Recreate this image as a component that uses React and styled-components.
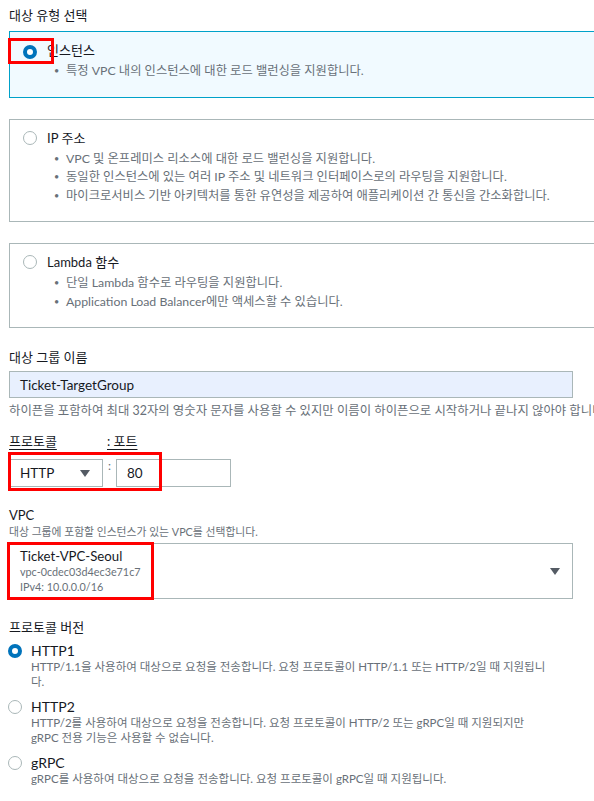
import styled, { createGlobalStyle } from "styled-components";

const GlobalStyle = createGlobalStyle`
  body {
    margin: 0;
    background: #ffffff;
    overflow: hidden;
    font-family: Lato, "Noto Sans CJK KR", sans-serif;
    color: #16191f;
  }
`;

const Palette = {
  Text: "#16191f",
  Muted: "#687078",
  Border: "#aab7b8",
  Blue: "#0073bb",
  Teal: "#00a1c9",
  Mark: "#ff0000",
};

const Page = styled.div`
  width: 640px;
  padding: 6px 0 20px 9px;
`;

const SectionTitle = styled.div`
  font-size: 13px;
  line-height: 18px;
  color: ${Palette.Text};
  margin-top: ${(p) => p.top || 0}px;
  margin-bottom: ${(p) => p.bottom || 0}px;
`;

const Hint = styled.div`
  font-size: ${(p) => p.size || 12}px;
  line-height: 16px;
  color: ${Palette.Muted};
  white-space: nowrap;
  margin-top: ${(p) => p.top || 0}px;
`;

const Cards = styled.div`
  display: flex;
  flex-direction: column;
  gap: 21px;
`;

const Card = styled.div`
  position: relative;
  width: 600px;
  border: 1px solid ${(p) => (p.selected ? Palette.Teal : Palette.Border)};
  background: ${(p) => (p.selected ? "#f1faff" : "#ffffff")};
  padding: 9px 0 16px 13px;
`;

const OptionHead = styled.div`
  display: flex;
  align-items: center;
  gap: 10px;
  font-size: 13px;
  line-height: 18px;
  color: ${Palette.Text};
`;

const Radio = styled.span`
  box-sizing: border-box;
  flex: none;
  width: 14px;
  height: 14px;
  border-radius: 50%;
  margin-top: ${(p) => p.shift || 0}px;
  ${(p) =>
    p.checked
      ? `
  border: 4px solid ${Palette.Blue};
  background: #ffffff;
  `
      : `
  border: 1px solid ${Palette.Border};
  background: #ffffff;
  `}
`;

const Bullets = styled.ul`
  margin: 3px 0 0 0;
  padding: 0 0 0 43px;
  list-style: none;
`;

const Bullet = styled.li`
  position: relative;
  font-size: 12.3px;
  line-height: 18.5px;
  color: ${Palette.Muted};
  white-space: nowrap;
  &::before {
    content: "•";
    position: absolute;
    left: -12px;
    font-size: 9px;
  }
`;

const TextInput = styled.div`
  box-sizing: border-box;
  width: ${(p) => p.width}px;
  height: ${(p) => p.height || 27}px;
  border: 1px solid ${Palette.Border};
  background: ${(p) => p.bg || "#ffffff"};
  display: flex;
  align-items: center;
  padding-left: ${(p) => p.pad || 10}px;
  font-size: 13.5px;
  color: ${Palette.Text};
`;

const LabelRow = styled.div`
  display: flex;
  margin-top: 13px;
  font-size: 13px;
  line-height: 18px;
`;

const Underlined = styled.span`
  width: ${(p) => p.width || "auto"};
  span {
    text-decoration: underline;
    text-underline-offset: 3px;
  }
`;

const FieldRow = styled.div`
  position: relative;
  display: flex;
  align-items: flex-start;
  margin-top: 9px;
`;

const Colon = styled.span`
  width: 13px;
  text-align: center;
  font-size: 12px;
  line-height: 14px;
  color: ${Palette.Muted};
`;

const Select = styled.div`
  box-sizing: border-box;
  width: 94px;
  height: 28px;
  border: 1px solid ${Palette.Border};
  display: flex;
  align-items: center;
  justify-content: space-between;
  padding: 0 12px 0 10px;
  font-size: 13.5px;
  color: ${Palette.Text};
`;

const Caret = styled.span`
  width: 0;
  height: 0;
  border-left: 5px solid transparent;
  border-right: 5px solid transparent;
  border-top: 7px solid #545b64;
`;

const VpcSelect = styled.div`
  position: relative;
  box-sizing: border-box;
  width: 564px;
  height: 56px;
  margin-top: 3px;
  border: 1px solid ${Palette.Border};
  display: flex;
  align-items: center;
  justify-content: space-between;
  padding: 0 12px 0 10px;
`;

const VpcLines = styled.div`
  display: flex;
  flex-direction: column;
  line-height: 15px;
`;

const VpcName = styled.span`
  font-size: 13.2px;
  color: ${Palette.Text};
`;

const VpcMeta = styled.span`
  font-size: 10.8px;
  color: ${Palette.Muted};
`;

const VersionList = styled.div`
  display: flex;
  flex-direction: column;
  gap: 10px;
  margin-top: 7px;
`;

const Version = styled.div`
  display: grid;
  grid-template-columns: 23px 1fr;
  margin-left: -1px;
`;

const VersionName = styled.div`
  font-size: 14px;
  line-height: 16px;
  color: ${Palette.Text};
`;

const VersionDesc = styled.div`
  grid-column: 2;
  font-size: 11.5px;
  line-height: 15px;
  color: ${Palette.Muted};
  white-space: nowrap;
`;

const Mark = styled.div`
  position: absolute;
  left: ${(p) => p.x}px;
  top: ${(p) => p.y}px;
  width: ${(p) => p.w}px;
  height: ${(p) => p.h}px;
  border: 3px solid ${Palette.Mark};
  box-sizing: border-box;
  pointer-events: none;
`;

const targetTypes = [
  {
    id: "instance",
    label: "인스턴스",
    checked: true,
    bullets: ["특정 VPC 내의 인스턴스에 대한 로드 밸런싱을 지원합니다."],
  },
  {
    id: "ip",
    label: "IP 주소",
    bullets: [
      "VPC 및 온프레미스 리소스에 대한 로드 밸런싱을 지원합니다.",
      "동일한 인스턴스에 있는 여러 IP 주소 및 네트워크 인터페이스로의 라우팅을 지원합니다.",
      "마이크로서비스 기반 아키텍처를 통한 유연성을 제공하여 애플리케이션 간 통신을 간소화합니다.",
    ],
  },
  {
    id: "lambda",
    label: "Lambda 함수",
    bullets: [
      "단일 Lambda 함수로 라우팅을 지원합니다.",
      "Application Load Balancer에만 액세스할 수 있습니다.",
    ],
  },
];

const versions = [
  {
    id: "http1",
    label: "HTTP1",
    checked: true,
    lines: [
      "HTTP/1.1을 사용하여 대상으로 요청을 전송합니다. 요청 프로토콜이 HTTP/1.1 또는 HTTP/2일 때 지원됩니",
      "다.",
    ],
  },
  {
    id: "http2",
    label: "HTTP2",
    lines: [
      "HTTP/2를 사용하여 대상으로 요청을 전송합니다. 요청 프로토콜이 HTTP/2 또는 gRPC일 때 지원되지만",
      "gRPC 전용 기능은 사용할 수 없습니다.",
    ],
  },
  {
    id: "grpc",
    label: "gRPC",
    lines: ["gRPC를 사용하여 대상으로 요청을 전송합니다. 요청 프로토콜이 gRPC일 때 지원됩니다."],
  },
];

function App() {
  return (
    <Page>
      <GlobalStyle />
      <SectionTitle bottom={7}>대상 유형 선택</SectionTitle>
      <Cards>
        {targetTypes.map((t) => (
          <Card key={t.id} selected={t.checked}>
            <OptionHead>
              <Radio checked={t.checked} shift={t.checked ? 3 : 0} />
              {t.label}
            </OptionHead>
            <Bullets>
              {t.bullets.map((b) => (
                <Bullet key={b}>{b}</Bullet>
              ))}
            </Bullets>
            {t.checked && <Mark x={-2} y={6} w={46} h={26} />}
          </Card>
        ))}
      </Cards>

      <SectionTitle top={20} bottom={5}>
        대상 그룹 이름
      </SectionTitle>
      <TextInput width={564} bg="#e8f0fe" pad={10}>
        Ticket-TargetGroup
      </TextInput>
      <Hint top={5} size={12.4}>
        하이픈을 포함하여 최대 32자의 영숫자 문자를 사용할 수 있지만 이름이 하이픈으로 시작하거나 끝나지 않아야 합니다.
      </Hint>

      <LabelRow>
        <Underlined width="98px">
          <span>프로토콜</span>
        </Underlined>
        <Underlined>
          <span>: 포트</span>
        </Underlined>
      </LabelRow>
      <FieldRow>
        <Select>
          HTTP
          <Caret />
        </Select>
        <Colon>:</Colon>
        <TextInput width={115} height={28} pad={10}>
          80
        </TextInput>
        <Mark x={-1} y={-7} w={154} h={39} />
      </FieldRow>

      <SectionTitle top={19}>VPC</SectionTitle>
      <Hint size={10.8}>대상 그룹에 포함할 인스턴스가 있는 VPC를 선택합니다.</Hint>
      <VpcSelect>
        <VpcLines>
          <VpcName>Ticket-VPC-Seoul</VpcName>
          <VpcMeta>vpc-0cdec03d4ec3e71c7</VpcMeta>
          <VpcMeta>IPv4: 10.0.0.0/16</VpcMeta>
        </VpcLines>
        <Caret />
        <Mark x={-3} y={-2} w={147} h={58} />
      </VpcSelect>

      <SectionTitle top={19}>프로토콜 버전</SectionTitle>
      <VersionList>
        {versions.map((v) => (
          <Version key={v.id}>
            <Radio checked={v.checked} shift={1} />
            <VersionName>{v.label}</VersionName>
            {v.lines.map((l) => (
              <VersionDesc key={l}>{l}</VersionDesc>
            ))}
          </Version>
        ))}
      </VersionList>
    </Page>
  );
}

export default App;
